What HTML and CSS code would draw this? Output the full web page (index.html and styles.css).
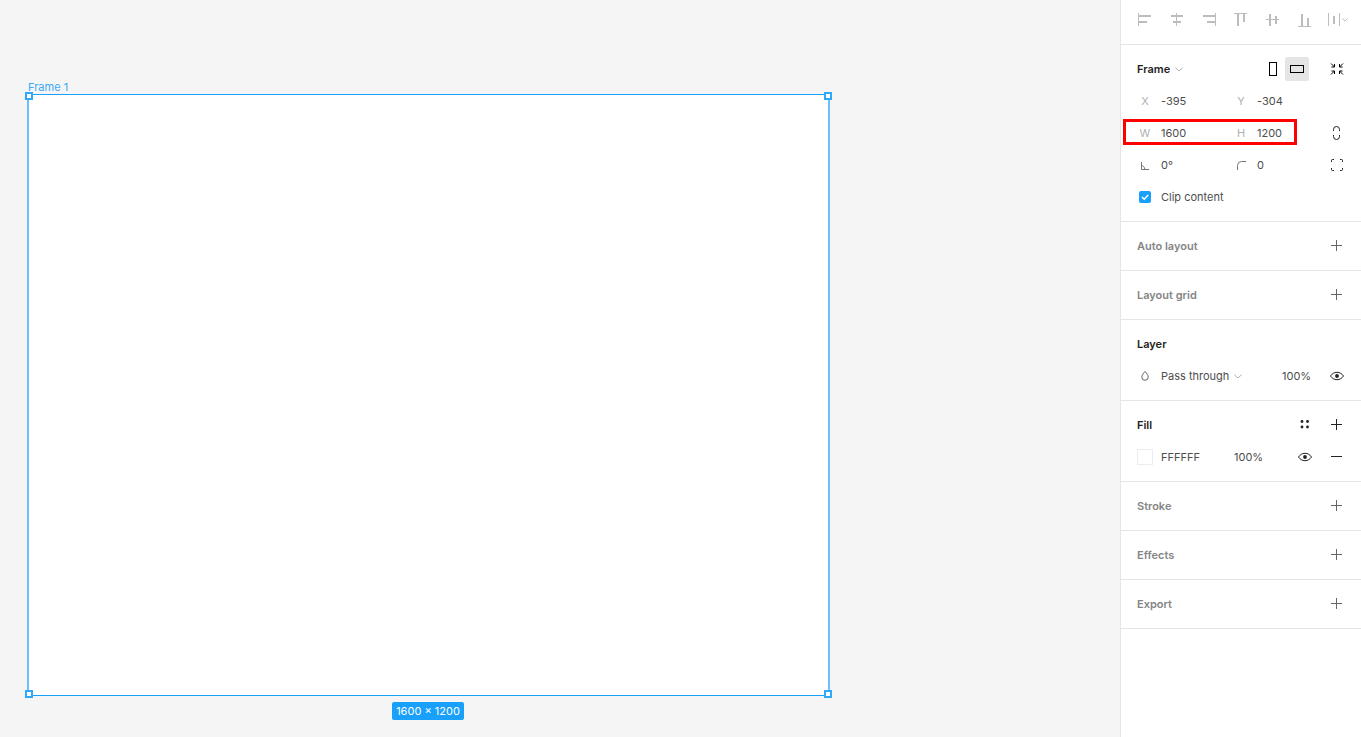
FILE: index.html
```html
<!DOCTYPE html>
<html lang="en">
<head>
  <meta charset="UTF-8" />
  <title>Frame properties</title>
  <link rel="stylesheet" href="styles.css">
</head>
<body>
  <svg class="defs" width="0" height="0">
    <symbol id="plus" viewBox="0 0 24 24"><path d="M11.500 6v11M6 11.500h11" fill="none" stroke="currentColor"/></symbol>
    <symbol id="minus" viewBox="0 0 24 24"><path d="M6 11.500h11" fill="none" stroke="currentColor"/></symbol>
    <symbol id="eye" viewBox="0 0 24 24"><path d="M5.500 12c1.600-2.400 3.800-3.700 6.500-3.700s4.900 1.300 6.500 3.700c-1.600 2.400-3.800 3.700-6.500 3.700S7.100 14.400 5.500 12z" fill="none" stroke="currentColor"/><circle cx="12" cy="12" r="1.900" fill="currentColor"/></symbol>
    <symbol id="chev" viewBox="0 0 8 5"><path d="M.5.8 4 4 7.500.8" fill="none" stroke="currentColor" stroke-width=".8"/></symbol>
  </svg>

  <div class="app">
    <main class="canvas">
      <div class="frame-label">Frame 1</div>
      <div class="frame">
        <span class="handle tl"></span>
        <span class="handle tr"></span>
        <span class="handle bl"></span>
        <span class="handle br"></span>
      </div>
      <div class="size-badge">1600 × 1200</div>
    </main>

    <aside class="panel">
      <div class="align-bar">
        <svg class="ico" viewBox="0 0 24 24"><path class="thin" d="M5.500 5v13"/><path d="M6 8h12M6 14h8"/></svg>
        <svg class="ico" viewBox="0 0 24 24"><path class="thin" d="M11.500 5v13"/><path d="M6 8h12M8 14h8"/></svg>
        <svg class="ico" viewBox="0 0 24 24"><path class="thin" d="M18.500 5v13"/><path d="M6 8h12M10 14h8"/></svg>
        <svg class="ico" viewBox="0 0 24 24"><path class="thin" d="M5 5.500h13"/><path d="M9 6v12M15 6v8"/></svg>
        <svg class="ico" viewBox="0 0 24 24"><path class="thin" d="M5 11.500h13"/><path d="M9 6v12M15 8v8"/></svg>
        <svg class="ico" viewBox="0 0 24 24"><path class="thin" d="M5 18.500h13"/><path d="M9 6v12M15 10v8"/></svg>
        <svg class="ico" viewBox="0 0 24 24"><path class="thin" d="M3.500 5v13M14.500 5v13M17.500 10.500 20 13l2.500-2.500"/><path d="M9 8v8"/></svg>
      </div>

      <section class="section">
        <div class="head">
          <h3 class="title">Frame<svg class="chev" width="8" height="5"><use href="#chev"/></svg></h3>
          <button class="ibtn portrait"><svg width="24" height="24" viewBox="0 0 24 24"><rect x="8.500" y="5.500" width="7" height="13" fill="none" stroke="#000"/></svg></button>
          <button class="ibtn on"><svg width="24" height="24" viewBox="0 0 24 24"><rect x="5.500" y="8.500" width="13" height="7" fill="none" stroke="#000"/></svg></button>
          <button class="ibtn"><svg width="24" height="24" viewBox="0 0 24 24"><path d="M6 6.500l3.500 3.500M9.500 7v3H6.500M18 6.500 14.500 10M14.500 7v3h3M6 17.500 9.500 14M9.500 17v-3H6.500M18 17.500 14.500 14M14.500 17v-3h3" fill="none" stroke="#000"/></svg></button>
        </div>
        <div class="fields">
          <span class="lbl">X</span><span>-395</span><span class="lbl">Y</span><span>-304</span>
        </div>
        <div class="fields">
          <span class="lbl">W</span><span>1600</span><span class="lbl">H</span><span>1200</span>
          <svg width="24" height="24" viewBox="0 0 24 24"><path d="M8.500 10V8.500a3 3 0 0 1 6 0V10M8.500 14v1.500a3 3 0 0 0 6 0V14" fill="none" stroke="#222"/></svg>
          <div class="highlight"></div>
        </div>
        <div class="fields">
          <span class="lbl"><svg width="16" height="16" viewBox="0 0 16 16"><path d="M4.500 5v7.500H12M4.500 8.500c2 0 3 1.600 3.300 4" fill="none" stroke="#777"/></svg></span><span>0°</span>
          <span class="lbl"><svg width="16" height="16" viewBox="0 0 16 16"><path d="M4.500 13V8.500a4 4 0 0 1 4-4H13" fill="none" stroke="#777"/></svg></span><span>0</span>
          <svg width="24" height="24" viewBox="0 0 24 24"><path d="M6.500 9V7.500a1 1 0 0 1 1-1H9M15 6.500h1.500a1 1 0 0 1 1 1V9M17.500 15v1.500a1 1 0 0 1-1 1H15M9 17.500H7.500a1 1 0 0 1-1-1V15" fill="none" stroke="#222"/></svg>
        </div>
        <div class="check-row">
          <span class="checkbox"><svg width="12" height="12" viewBox="0 0 12 12"><path d="M3 6l2.200 2.200L9.200 4" fill="none" stroke="#fff" stroke-width="1.500"/></svg></span>
          <span>Clip content</span>
        </div>
      </section>

      <section class="section">
        <div class="head"><h3 class="title muted">Auto layout</h3><svg class="add" width="24" height="24"><use href="#plus"/></svg></div>
      </section>
      <section class="section">
        <div class="head"><h3 class="title muted">Layout grid</h3><svg class="add" width="24" height="24"><use href="#plus"/></svg></div>
      </section>

      <section class="section">
        <div class="head"><h3 class="title">Layer</h3></div>
        <div class="row">
          <span class="lead"><svg width="16" height="16" viewBox="0 0 16 16"><path d="M8 3.500c-1.800 2-3.200 3.700-3.200 5.600a3.200 3.200 0 0 0 6.400 0C11.200 7.200 9.800 5.500 8 3.500z" fill="none" stroke="#666"/></svg></span>
          <span class="blend">Pass through<svg class="chev" width="8" height="5"><use href="#chev"/></svg></span>
          <span class="pct">100%</span>
          <svg class="dark" width="24" height="24"><use href="#eye"/></svg>
        </div>
      </section>

      <section class="section">
        <div class="head">
          <h3 class="title">Fill</h3>
          <svg width="24" height="24" viewBox="0 0 24 24"><g fill="#222"><circle cx="9" cy="8.500" r="1.400"/><circle cx="14.500" cy="8.500" r="1.400"/><circle cx="9" cy="14" r="1.400"/><circle cx="14.500" cy="14" r="1.400"/></g></svg>
          <svg class="dark" width="24" height="24"><use href="#plus"/></svg>
        </div>
        <div class="row">
          <span class="lead"><span class="swatch"></span></span>
          <span class="hex">FFFFFF</span>
          <span class="fill-pct">100%</span>
          <svg class="dark" width="24" height="24"><use href="#eye"/></svg>
          <svg class="dark" width="24" height="24"><use href="#minus"/></svg>
        </div>
      </section>

      <section class="section">
        <div class="head"><h3 class="title muted">Stroke</h3><svg class="add" width="24" height="24"><use href="#plus"/></svg></div>
      </section>
      <section class="section">
        <div class="head"><h3 class="title muted">Effects</h3><svg class="add" width="24" height="24"><use href="#plus"/></svg></div>
      </section>
      <section class="section">
        <div class="head"><h3 class="title muted">Export</h3><svg class="add" width="24" height="24"><use href="#plus"/></svg></div>
      </section>
    </aside>
  </div>
</body>
</html>
```

FILE: styles.css
```css
* {
  box-sizing: border-box;
}
body {
  margin: 0;
  font-family: Inter, "Noto Sans", sans-serif;
  font-size: 11px;
  color: #4d4d4d;
  overflow: hidden;
}
.defs {
  position: absolute;
}
.app {
  display: flex;
  height: 737px;
}

/* canvas */
.canvas {
  position: relative;
  flex: 1;
  background: #f5f5f5;
}
.frame-label {
  position: absolute;
  left: 28px;
  top: 81px;
  line-height: 13px;
  color: #3aa9f5;
}
.frame {
  position: absolute;
  left: 27px;
  top: 94px;
  width: 803px;
  height: 602px;
  background: #fff;
  border: 1px solid #18a0fb;
  border-left: 2px solid #6cc1fc;
  border-right: 2px solid #6cc1fc;
}
.handle {
  position: absolute;
  width: 8px;
  height: 8px;
  background: #fff;
  border: 2px solid #30a9fb;
}
.handle.tl { left: -4px; top: -3px; }
.handle.tr { right: -4px; top: -3px; }
.handle.bl { left: -4px; bottom: -3px; }
.handle.br { right: -4px; bottom: -3px; }
.size-badge {
  position: absolute;
  left: 392px;
  top: 702px;
  width: 72px;
  height: 18px;
  line-height: 18px;
  text-align: center;
  color: #fff;
  background: #18a0fb;
  border-radius: 2px;
}

/* right panel */
.panel {
  width: 241px;
  flex: none;
  background: #fff;
  border-left: 1px solid #e5e5e5;
}
.align-bar {
  display: flex;
  gap: 8px;
  height: 45px;
  padding: 8px 0 0 12px;
  border-bottom: 1px solid #e5e5e5;
}
.ico {
  width: 24px;
  height: 24px;
  fill: none;
  stroke: #bdbdbd;
  stroke-width: 2;
}
.ico .thin {
  stroke-width: 1;
}
.section {
  padding: 8px 12px 8px 16px;
  border-bottom: 1px solid #e5e5e5;
}
.head {
  display: flex;
  align-items: center;
  gap: 8px;
  height: 32px;
}
.title {
  flex: 1;
  margin: 0;
  font-size: 11px;
  font-weight: 600;
  color: #222;
}
.title.muted {
  color: #858585;
}
.chev {
  margin-left: 5px;
  color: #999;
  vertical-align: 1px;
}
.ibtn {
  width: 24px;
  height: 24px;
  padding: 0;
  border: 0;
  border-radius: 2px;
  background: none;
}
.ibtn.portrait {
  margin-right: -8px;
}
.ibtn.on {
  margin-right: 8px;
  background: #e5e5e5;
}
.add {
  color: #666;
}
.dark {
  color: #222;
}
.fields {
  position: relative;
  display: grid;
  grid-template-columns: 24px 72px 24px 68px 24px;
  align-items: center;
  height: 32px;
}
.lbl {
  display: flex;
  justify-content: center;
  width: 16px;
  color: #b0b0b0;
}
.highlight {
  position: absolute;
  left: -14px;
  top: 2px;
  width: 174px;
  height: 26px;
  border: 3px solid #f00;
}
.check-row {
  display: flex;
  align-items: center;
  height: 32px;
}
.checkbox {
  display: flex;
  width: 12px;
  height: 12px;
  margin: 0 10px 0 2px;
  border-radius: 2px;
  background: #18a0fb;
}
.row {
  display: flex;
  align-items: center;
  height: 32px;
}
.lead {
  display: flex;
  width: 24px;
}
.swatch {
  width: 16px;
  height: 16px;
  background: #fff;
  border: 1px solid #ededed;
}
.blend {
  width: 121px;
}
.pct {
  width: 43px;
}
.hex {
  width: 73px;
}
.fill-pct {
  width: 59px;
}
.row svg + svg {
  margin-left: 8px;
}
```
